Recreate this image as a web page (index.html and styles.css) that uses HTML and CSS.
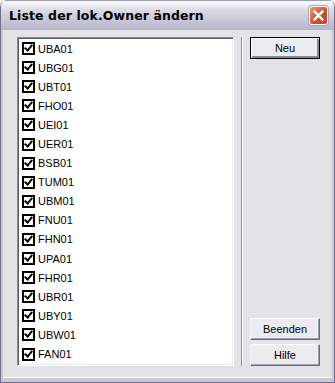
FILE: index.html
```html
<!DOCTYPE html>
<html lang="de">
  <head>
    <meta charset="UTF-8" />
    <title>Liste der lok.Owner ändern</title>
    <link rel="stylesheet" href="styles.css">
  </head>
  <body>
    <div class="window">
      <div class="title-bar">
        <span class="title">Liste der lok.Owner ändern</span>
        <div class="close-btn">
          <svg width="13" height="13" viewBox="0 0 13 13">
            <path d="M2.5 2.5 L10.5 10.5 M10.5 2.5 L2.5 10.5" stroke="#fff" stroke-width="2.4" stroke-linecap="square" />
          </svg>
        </div>
      </div>

      <div class="window-body">
        <div class="owner-list">
          <div class="list-item"><span class="check"></span>UBA01</div>
          <div class="list-item"><span class="check"></span>UBG01</div>
          <div class="list-item"><span class="check"></span>UBT01</div>
          <div class="list-item"><span class="check"></span>FHO01</div>
          <div class="list-item"><span class="check"></span>UEI01</div>
          <div class="list-item"><span class="check"></span>UER01</div>
          <div class="list-item"><span class="check"></span>BSB01</div>
          <div class="list-item"><span class="check"></span>TUM01</div>
          <div class="list-item"><span class="check"></span>UBM01</div>
          <div class="list-item"><span class="check"></span>FNU01</div>
          <div class="list-item"><span class="check"></span>FHN01</div>
          <div class="list-item"><span class="check"></span>UPA01</div>
          <div class="list-item"><span class="check"></span>FHR01</div>
          <div class="list-item"><span class="check"></span>UBR01</div>
          <div class="list-item"><span class="check"></span>UBY01</div>
          <div class="list-item"><span class="check"></span>UBW01</div>
          <div class="list-item"><span class="check"></span>FAN01</div>
        </div>

        <div class="separator"></div>

        <div class="button-column">
          <div class="btn btn-default">Neu</div>
          <div class="spacer"></div>
          <div class="btn">Beenden</div>
          <div class="btn">Hilfe</div>
        </div>
      </div>
    </div>
  </body>
</html>
```

FILE: styles.css
```css
body {
  margin: 0;
  background: #fff;
}

.window {
  width: 335px;
  height: 383px;
  box-sizing: border-box;
  display: flex;
  flex-direction: column;
  background: #e3e2e7;
  border: 1px solid #6f6e82;
  border-top: none;
  border-radius: 7px 7px 0 0;
  overflow: hidden;
  box-shadow: inset 1px 0 #fff, inset -1px 0 #b8b7c5, inset 0 -1px #b8b7c5;
}

.title-bar {
  height: 29px;
  flex: none;
  display: flex;
  align-items: center;
  padding: 0 6px 0 8px;
  background: linear-gradient(#fdfdfe 0%, #dcdce6 30%, #c6c5d6 70%, #b7b6c9 100%);
  border-top: 1px solid #9e9db0;
}

.title {
  flex: 1;
  font-family: "DejaVu Sans", sans-serif;
  font-weight: bold;
  font-size: 12.5px;
  color: #000;
  letter-spacing: 0.1px;
}

.close-btn {
  width: 19px;
  height: 19px;
  box-sizing: border-box;
  display: flex;
  align-items: center;
  justify-content: center;
  border: 1px solid #fff;
  border-radius: 3px;
  background: linear-gradient(135deg, #e9957a, #d4532d 55%, #c1411f);
  box-shadow: 0 0 0 1px #a9a8bb;
}

.window-body {
  flex: 1;
  display: flex;
  padding: 7px 10px 12px 14px;
  border-left: 2px solid #c8c7d4;
  border-right: 2px solid #c8c7d4;
  border-bottom: 4px solid #c8c7d4;
  box-shadow: inset 0 -1px #fff;
}

.owner-list {
  width: 217px;
  box-sizing: border-box;
  background: #fff;
  border: 1px solid;
  border-color: #8c8b9b #fff #fff #8c8b9b;
  box-shadow: inset 1px 1px #5b5a6a, inset -1px -1px #ecebf0;
  padding: 1px 4px;
  font-family: "Liberation Sans", Arial, sans-serif;
  font-size: 11px;
  color: #000;
}

.list-item {
  height: 19.1px;
  display: flex;
  align-items: center;
  gap: 3px;
}

.check {
  width: 13px;
  height: 13px;
  box-sizing: border-box;
  border: 2px solid #000;
  position: relative;
  background: #fff;
}

.check::after {
  content: "";
  position: absolute;
  left: 2px;
  top: -1px;
  width: 3px;
  height: 6px;
  border: solid #000;
  border-width: 0 2.5px 2.5px 0;
  transform: rotate(40deg);
}

.separator {
  width: 1px;
  margin: 0 7px;
  background: #8c8b9b;
  border-right: 1px solid #fff;
}

.button-column {
  flex: 1;
  display: flex;
  flex-direction: column;
  gap: 4px;
  padding-right: 2px;
}

.spacer {
  flex: 1;
}

.btn {
  height: 22px;
  box-sizing: border-box;
  display: flex;
  align-items: center;
  justify-content: center;
  font-family: "Liberation Sans", Arial, sans-serif;
  font-size: 11px;
  color: #000;
  background: #ecebf0;
  border: 1px solid;
  border-color: #fff #6a6979 #6a6979 #fff;
  box-shadow: inset -1px -1px #a09faf;
}

.btn-default {
  border-color: #000;
  box-shadow: inset 1px 1px #fff, inset -2px -2px #8a899a;
}
```
